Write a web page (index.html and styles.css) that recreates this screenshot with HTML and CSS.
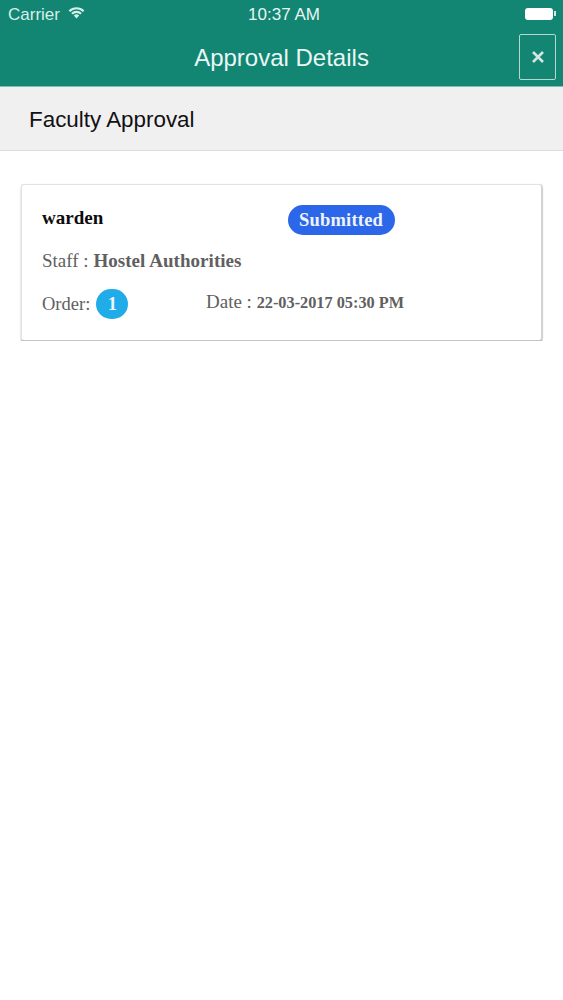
FILE: index.html
```html
<!DOCTYPE html>
<html lang="en">
<head>
  <meta charset="UTF-8">
  <meta name="viewport" content="width=device-width, initial-scale=1.0">
  <title>Approval Details</title>
  <link rel="stylesheet" href="styles.css">
</head>
<body>
  <div class="header">
    <div class="status-bar">
      <div class="status-left">
        <span>Carrier</span>
        <svg class="wifi" width="17" height="13" viewBox="0 0 17 13">
          <path d="M0.6 4.4 A11.2 11.2 0 0 1 16.4 4.4 L14.9 5.9 A9.1 9.1 0 0 0 2.1 5.9 Z" fill="#d5efe9"/>
          <path d="M3.2 7 A7.5 7.5 0 0 1 13.8 7 L12.3 8.5 A5.4 5.4 0 0 0 4.7 8.5 Z" fill="#d5efe9"/>
          <path d="M5.8 9.6 A3.8 3.8 0 0 1 11.2 9.6 L8.5 12.4 Z" fill="#d5efe9"/>
        </svg>
      </div>
      <div class="status-time">10:37 AM</div>
      <div class="battery"><div class="battery-body"></div><div class="battery-tip"></div></div>
    </div>
    <div class="nav-bar">
      <h1>Approval Details</h1>
      <button class="close-btn">
        <svg width="14" height="14" viewBox="0 0 14 14">
          <path d="M2 2 L12 12 M12 2 L2 12" stroke="#d3e6e1" stroke-width="2.6"/>
        </svg>
      </button>
    </div>
  </div>

  <div class="section-title">Faculty Approval</div>

  <div class="card">
    <div class="row row-top">
      <div class="name">warden</div>
      <span class="status-badge">Submitted</span>
    </div>
    <div class="row row-staff">Staff :&nbsp;<b>Hostel Authorities</b></div>
    <div class="row row-bottom">
      <div class="order">Order: <span class="order-badge">1</span></div>
      <div class="date">Date : <b>22-03-2017 05:30 PM</b></div>
    </div>
  </div>
</body>
</html>
```

FILE: styles.css
```css
body {
  margin: 0;
  padding: 0;
  background: #fff;
  font-family: 'Liberation Sans', Arial, sans-serif;
}

.header {
  background: #128573;
  height: 86px;
  border-bottom: 1px solid #7fbfb2;
}

.status-bar {
  height: 29px;
  display: flex;
  align-items: center;
  justify-content: space-between;
  padding: 0 7px 0 8px;
  color: #d5efe9;
  font-size: 17px;
  position: relative;
}

.status-left {
  display: flex;
  align-items: center;
  gap: 8px;
}

.wifi {
  margin-top: -5px;
}

.status-time {
  position: absolute;
  left: 5px;
  right: 0;
  top: 5px;
  text-align: center;
  color: #e8f5f2;
}

.battery {
  display: flex;
  align-items: center;
  margin-top: -2px;
}

.battery-body {
  width: 28px;
  height: 12px;
  background: #fff;
  border-radius: 3px;
}

.battery-tip {
  width: 2px;
  height: 5px;
  background: #cfe6e1;
  margin-left: 1px;
}

.nav-bar {
  height: 57px;
  display: flex;
  align-items: center;
  justify-content: center;
  position: relative;
}

h1 {
  margin: 0;
  font-size: 24px;
  font-weight: normal;
  color: #e9f7f4;
}

.close-btn {
  position: absolute;
  right: 7px;
  top: 5px;
  width: 37px;
  height: 46px;
  padding: 0;
  background: none;
  border: 1.5px solid #b5d8d1;
  border-radius: 2px;
  display: flex;
  align-items: center;
  justify-content: center;
}

.section-title {
  height: 63px;
  line-height: 65px;
  padding-left: 29px;
  background: #f1f0f1;
  border-bottom: 1px solid #dedede;
  font-size: 22.4px;
  color: #111;
}

.card {
  margin: 33px 21px 0 21px;
  height: 157px;
  background: #fff;
  border: 1px solid #e2e2e2;
  border-bottom-color: #c4c4c4;
  border-right-color: #d2d2d2;
  border-radius: 3px;
  box-shadow: 0 2px 2px rgba(0, 0, 0, 0.28), 1px 0 1px rgba(0, 0, 0, 0.12);
  padding: 0 20px;
  font-family: 'Liberation Serif', 'Times New Roman', serif;
  font-size: 18.5px;
  color: #606060;
  box-sizing: border-box;
}

.row {
  display: flex;
  align-items: center;
}

.row-top {
  height: 36px;
  padding-top: 17px;
}

.name {
  width: 246px;
  font-size: 19px;
  font-weight: bold;
  color: #0c0c0c;
  position: relative;
  top: -2px;
}

.status-badge {
  background: #2b67e8;
  color: #eef3fd;
  font-weight: bold;
  height: 30px;
  line-height: 30px;
  padding: 0 12px 0 11px;
  border-radius: 15px;
  letter-spacing: 0.2px;
}

.row-staff {
  height: 26px;
  margin-top: 10px;
  font-size: 19px;
}

.row-staff b {
  letter-spacing: 0.05px;
}

.row-bottom {
  margin-top: 15px;
  height: 30px;
}

.order {
  width: 164px;
  display: flex;
  align-items: center;
  gap: 6px;
}

.order-badge {
  width: 32px;
  height: 30px;
  border-radius: 15px;
  background: #20ace9;
  color: #eaf7fd;
  font-weight: bold;
  text-align: center;
  line-height: 30px;
}

.date {
  position: relative;
  top: -2px;
  font-size: 19px;
}

.date b {
  font-size: 16.3px;
}
```
